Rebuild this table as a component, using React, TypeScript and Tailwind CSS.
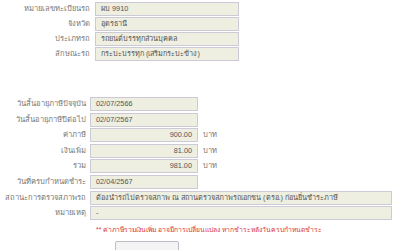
const topRows = [
  { label: 'หมายเลขทะเบียนรถ', value: 'ผบ 9910' },
  { label: 'จังหวัด', value: 'อุดรธานี' },
  { label: 'ประเภทรถ', value: 'รถยนต์บรรทุกส่วนบุคคล' },
  { label: 'ลักษณะรถ', value: 'กระบะบรรทุก (เสริมกระบะข้าง)' },
];

type Row = { label: string; value: string; kind: 'short' | 'money' | 'long' };

const taxRows: Row[] = [
  { label: 'วันสิ้นอายุภาษีปัจจุบัน', value: '02/07/2566', kind: 'short' },
  { label: 'วันสิ้นอายุภาษีปีต่อไป', value: '02/07/2567', kind: 'short' },
  { label: 'ค่าภาษี', value: '900.00', kind: 'money' },
  { label: 'เงินเพิ่ม', value: '81.00', kind: 'money' },
  { label: 'รวม', value: '981.00', kind: 'money' },
  { label: 'วันที่ครบกำหนดชำระ', value: '02/04/2567', kind: 'short' },
  { label: 'สถานะการตรวจสภาพรถ', value: 'ต้องนำรถไปตรวจสภาพ ณ สถานตรวจสภาพรถเอกชน (ตรอ.) ก่อนยื่นชำระภาษี', kind: 'long' },
  { label: 'หมายเหตุ', value: '-', kind: 'long' },
];

const box = 'h-[14px] border border-[#cdcad8] bg-[#eeeee1] px-[5px] text-[7.3px] leading-[12px] text-[#555] truncate';

export default function App() {
  return (
    <div className="w-[400px] h-[250px] overflow-hidden bg-white font-['Tahoma','Liberation_Sans',sans-serif] text-[7.6px]">
      {/* ข้อมูลรถ */}
      <div className="pt-[2px] flex flex-col gap-[1px]">
        {topRows.map((r) => (
          <div key={r.label} className="flex items-center h-[14px]">
            <div className="w-[95px] pr-[5px] text-right text-[#777] leading-[12px]">{r.label}</div>
            <div className={`${box} w-[144px]`}>{r.value}</div>
          </div>
        ))}
      </div>

      {/* ข้อมูลภาษี */}
      <div className="mt-[36px] flex flex-col gap-[1.6px]">
        {taxRows.map((r) => (
          <div key={r.label} className="flex items-center h-[14px]">
            <div className="w-[90px] pr-[4px] text-right text-[#777] leading-[12px] whitespace-nowrap">{r.label}</div>
            {r.kind === 'long' ? (
              <div className={`${box} w-[302px]`}>{r.value}</div>
            ) : (
              <>
                <div className={`${box} w-[108px] ${r.kind === 'money' ? 'text-right' : ''}`}>{r.value}</div>
                {r.kind === 'money' && <span className="ml-[5px] text-[#777] leading-[12px]">บาท</span>}
              </>
            )}
          </div>
        ))}
      </div>

      <div className="mt-[4px] pl-[96px] text-[6.8px] text-[#d9383a] leading-[12px]">
        ** ค่าภาษีรวมเงินเพิ่ม อาจมีการเปลี่ยนแปลง หากชำระหลังวันครบกำหนดชำระ
      </div>

      <div className="mt-[5px] ml-[115px] w-[64px] h-[20px] border border-[#bdbdc6] bg-[#f4f4f4] rounded-[2px]" />
    </div>
  );
}
